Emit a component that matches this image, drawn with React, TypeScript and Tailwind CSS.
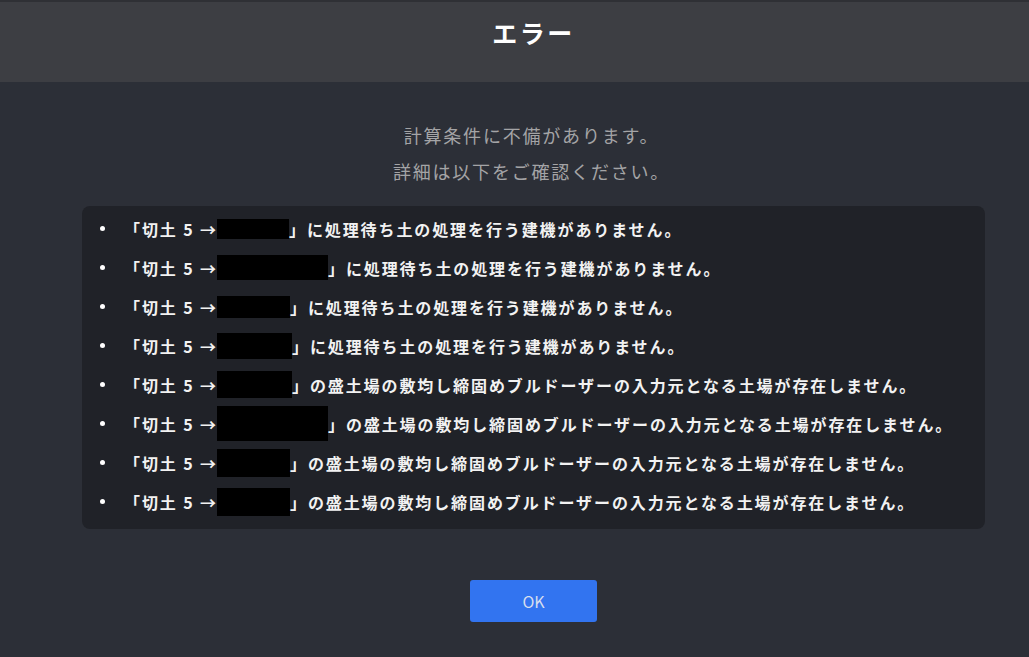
const rows: { w: number; h: number; msg: string }[] = [
  { w: 72, h: 20, msg: '」に処理待ち土の処理を行う建機がありません。' },
  { w: 111, h: 25, msg: '」に処理待ち土の処理を行う建機がありません。' },
  { w: 73, h: 22, msg: '」に処理待ち土の処理を行う建機がありません。' },
  { w: 75, h: 26, msg: '」に処理待ち土の処理を行う建機がありません。' },
  { w: 75, h: 27, msg: '」の盛土場の敷均し締固めブルドーザーの入力元となる土場が存在しません。' },
  { w: 111, h: 35, msg: '」の盛土場の敷均し締固めブルドーザーの入力元となる土場が存在しません。' },
  { w: 73, h: 28, msg: '」の盛土場の敷均し締固めブルドーザーの入力元となる土場が存在しません。' },
  { w: 73, h: 28, msg: '」の盛土場の敷均し締固めブルドーザーの入力元となる土場が存在しません。' },
];

export default function App() {
  return (
    <div
      className="w-[1029px] h-[657px] bg-[#2c2f37] flex flex-col overflow-hidden"
      style={{ fontFamily: '"Noto Sans CJK JP", "Noto Sans", sans-serif' }}
    >
      {/* Header */}
      <div className="h-[82px] shrink-0 bg-[#3d3e43] border-t-2 border-[#2f3035] flex items-center justify-center pl-[38px]">
        <h1 className="text-[25px] font-bold text-white tracking-[0.1em] leading-none -mt-[20px]">エラー</h1>
      </div>

      {/* Body */}
      <div className="flex flex-col items-center pl-[38px] pt-[35px]">
        <p className="text-[18px] leading-[36px] text-[#a4a4a6] tracking-[0.1em] -ml-[4px]">計算条件に不備があります。</p>
        <p className="text-[18px] leading-[36px] text-[#a4a4a6] tracking-[0.1em] -ml-[4px]">詳細は以下をご確認ください。</p>

        <ul className="mt-[17px] w-[903px] bg-[#202228] rounded-[8px] pt-[3px] pb-[8px]">
          {rows.map((r, i) => (
            <li key={i} className="h-[39px] flex items-center pl-[18px] text-[16px] font-bold text-[#f2f2f2] tracking-[1.9px] whitespace-nowrap">
              <span className="w-[5px] h-[5px] rounded-full bg-white shrink-0" />
              <span className="w-[93px] ml-[19px] shrink-0">「切土 5 →</span>
              <span className="bg-black shrink-0" style={{ width: r.w, height: r.h }} />
              <span>{r.msg}</span>
            </li>
          ))}
        </ul>

        <button className="mt-[51px] w-[127px] h-[42px] rounded-[3px] bg-[#3274f0] text-[#d6deee] text-[16px]">
          OK
        </button>
      </div>
    </div>
  );
}
